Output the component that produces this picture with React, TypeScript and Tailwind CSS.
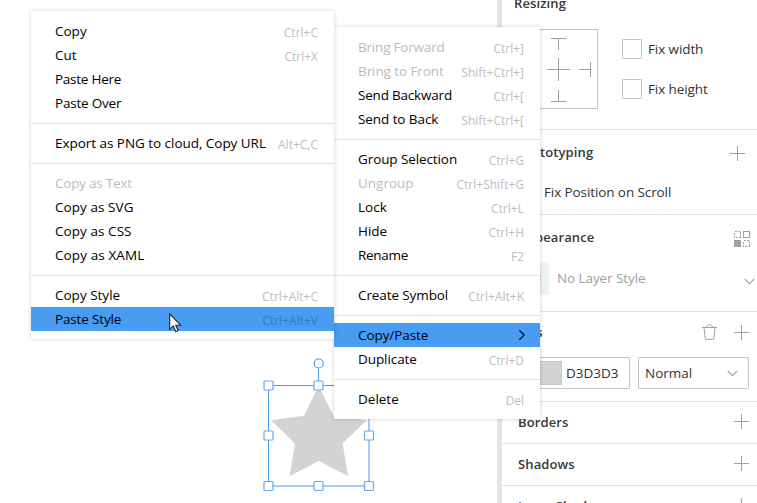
import React from 'react';

type Item = { label: string; keys?: string; disabled?: boolean; active?: boolean; sub?: boolean; ls?: number };

const clipboardMenu: Item[][] = [
  [
    { label: 'Copy', keys: 'Ctrl+C' },
    { label: 'Cut', keys: 'Ctrl+X' },
    { label: 'Paste Here', ls: -0.25 },
    { label: 'Paste Over', ls: -0.2 },
  ],
  [{ label: 'Export as PNG to cloud, Copy URL', keys: 'Alt+C,C', ls: -0.04 }],
  [
    { label: 'Copy as Text', disabled: true, ls: -0.22 },
    { label: 'Copy as SVG', ls: 0.06 },
    { label: 'Copy as CSS', ls: 0.06 },
    { label: 'Copy as XAML', ls: 0.1 },
  ],
  [
    { label: 'Copy Style', keys: 'Ctrl+Alt+C' },
    { label: 'Paste Style', keys: 'Ctrl+Alt+V', active: true, ls: -0.15 },
  ],
];

const layerMenu: Item[][] = [
  [
    { label: 'Bring Forward', keys: 'Ctrl+]', disabled: true, ls: -0.2 },
    { label: 'Bring to Front', keys: 'Shift+Ctrl+]', disabled: true, ls: -0.08 },
    { label: 'Send Backward', keys: 'Ctrl+[', ls: -0.2 },
    { label: 'Send to Back', keys: 'Shift+Ctrl+[', ls: -0.08 },
  ],
  [
    { label: 'Group Selection', keys: 'Ctrl+G', ls: -0.1 },
    { label: 'Ungroup', keys: 'Ctrl+Shift+G', disabled: true },
    { label: 'Lock', keys: 'Ctrl+L' },
    { label: 'Hide', keys: 'Ctrl+H' },
    { label: 'Rename', keys: 'F2', ls: -0.3 },
  ],
  [{ label: 'Create Symbol', keys: 'Ctrl+Alt+K', ls: -0.1 }],
  [
    { label: 'Copy/Paste', active: true, sub: true, ls: -0.08 },
    { label: 'Duplicate', keys: 'Ctrl+D', ls: -0.08 },
  ],
  [{ label: 'Delete', keys: 'Del' }],
];

function Menu({ groups, className }: { groups: Item[][]; className: string }) {
  return (
    <div className={`absolute bg-white py-2 shadow-[0_0_4px_rgba(0,0,0,0.2)] ${className}`}>
      {groups.map((group, g) => (
        <React.Fragment key={g}>
          {g > 0 && (
            <div className="h-4 pt-2">
              <div className="h-px bg-[#e0e0e0]" />
            </div>
          )}
          {group.map((item) => (
            <div
              key={item.label}
              className={`flex h-6 items-center justify-between whitespace-nowrap pl-6 pr-4 text-[13.5px] leading-6 ${item.active ? 'bg-[#489cf2]' : ''} ${item.disabled ? 'text-[#bcbcbc]' : 'text-black'}`}
            >
              <span style={{ letterSpacing: item.ls ?? 0 }}>{item.label}</span>
              {item.keys && (
                <span className={`pt-1 text-[12px] ${item.active ? 'text-[#3779b9]' : 'text-[#bdbdbd]'}`}>{item.keys}</span>
              )}
              {item.sub && (
                <svg className="-mr-0.5" width="8" height="12" viewBox="0 0 8 12" fill="none" stroke="#111" strokeWidth="1.3">
                  <path d="M1.2 1.2 6.2 6 1.2 10.8" />
                </svg>
              )}
            </div>
          ))}
        </React.Fragment>
      ))}
    </div>
  );
}

const Plus = () => (
  <svg className="shrink-0" width="15" height="15" viewBox="0 0 15 15" stroke="#a0a0a0" shapeRendering="crispEdges">
    <path d="M0 7.5H15M7.5 0V15" />
  </svg>
);

const Chevron = () => (
  <svg className="shrink-0" width="11" height="7" viewBox="0 0 11 7" fill="none" stroke="#a0a0a0" strokeWidth="1.2">
    <path d="M.7.8 5.5 5.6 10.3.8" />
  </svg>
);

const Title = ({ children }: { children: string }) => (
  <h2 className="text-[13px] font-semibold leading-5 tracking-[0.12px] text-[#383838]">{children}</h2>
);

const Check = ({ label }: { label: string }) => (
  <div className="flex h-5 items-center gap-1.5 text-[13.5px]">
    <i className="size-5 rounded-[1px] border border-[#c4c4c4]" />
    <span className="whitespace-nowrap tracking-[-0.1px]">{label}</span>
  </div>
);

function Inspector() {
  return (
    <aside className="h-[503px] w-[260px] shrink-0 overflow-hidden border-l-[5px] border-[#e4e4e4] bg-white text-[#333]">
      <section className="flow-root h-[130px] border-b border-[#e0e0e0] pl-4">
        <div className="-ml-1 -mt-[7px]"><Title>Resizing</Title></div>
        <div className="mt-4 flex gap-6">
          <div className="h-20 w-20 border border-[#c4c4c4]">
            <svg width="78" height="78" viewBox="519 30 78 78" stroke="#a0a0a0" shapeRendering="crispEdges">
              <path d="M551 38.5h15M558.5 38v12M547 69.5h23M558.5 58v23M579 69.5h12M590.5 62v15M551 101.5h15M558.5 90v12M526.5 62v15M526 69.5h12" />
            </svg>
          </div>
          <div className="flex flex-col gap-5 pt-2.5">
            <Check label="Fix width" />
            <Check label="Fix height" />
          </div>
        </div>
      </section>
      <section className="h-[85px] border-b border-[#e0e0e0] pl-4 pt-3">
        <div className="flex items-start justify-between pr-3">
          <Title>Prototyping</Title>
          <div className="pt-1"><Plus /></div>
        </div>
        <div className="mt-5"><Check label="Fix Position on Scroll" /></div>
      </section>
      <section className="h-[97px] border-b border-[#e0e0e0] pl-4 pt-3">
        <div className="flex items-start justify-between pr-[7px]">
          <Title>Appearance</Title>
          <svg className="mt-1" width="16" height="16" viewBox="0 0 16 16" fill="none" stroke="#a0a0a0" shapeRendering="crispEdges">
            <path d="M.5.5h6v6h-6zM9.5 9.5h6v6h-6z" strokeDasharray="2 1" />
            <path d="M9.5.5h6v6h-6z" />
            <rect x=".5" y="9.5" width="6" height="6" fill="#a0a0a0" />
          </svg>
        </div>
        <div className="mt-4 flex items-center">
          <div className="flex h-8 w-[31px] items-center justify-end rounded-[2px] bg-[#f1f1f1] pr-2 text-[#999]">≡</div>
          <span className="ml-2 grow pb-0.5 text-[13.5px] tracking-[-0.08px] text-[#a0a0a0]">No Layer Style</span>
          <span className="pr-0.5 pt-1"><Chevron /></span>
        </div>
      </section>
      <section className="h-[90px] border-b border-[#e0e0e0] pl-4 pt-[10px]">
        <div className="flex items-center pr-2">
          <div className="grow"><Title>Fills</Title></div>
          <svg className="mr-[17px]" width="15" height="16" viewBox="0 0 15 16" fill="none" stroke="#a0a0a0">
            <path d="M0 3.5h15M2 4l1.4 11.3h8.2L13 4M4.6 3.3C4.8 1.5 5.6.7 7.5.7s2.7.8 2.9 2.6" />
          </svg>
          <Plus />
        </div>
        <div className="mt-[15px] flex gap-2 text-[13.5px]">
          <div className="flex h-8 w-28 items-center rounded-[1px] border border-[#c4c4c4] pl-1">
            <i className="h-6 w-[39px] border border-[#c8c8c8] bg-[#d3d3d3]" />
            <span className="ml-1">D3D3D3</span>
          </div>
          <div className="flex h-8 w-[111px] items-center justify-between rounded-[1px] border border-[#c4c4c4] pl-1.5 pr-[10px]">
            <span>Normal</span>
            <Chevron />
          </div>
        </div>
      </section>
      {['Borders', 'Shadows', 'Inner Shadows'].map((name) => (
        <section key={name} className="flex h-[42px] items-center justify-between border-b border-[#e0e0e0] pl-4 pr-2">
          <div className="pb-0.5"><Title>{name}</Title></div>
          <div className="-mt-0.5"><Plus /></div>
        </section>
      ))}
    </aside>
  );
}

const handles = [[268, 385], [318, 385], [368.5, 385], [268, 435], [368.5, 435], [268, 485.5], [318, 485.5], [368.5, 485.5]];

function Canvas() {
  return (
    <main className="w-[497px] shrink-0 bg-white">
      <svg width="497" height="503" viewBox="0 0 497 503" fill="none">
        <path d="M318.7 386 333.5 415.8 366.8 420.3 342.5 443.5 348.2 476.2 318.7 461 289.5 476.2 295 443.5 271 420.3 304 415.8z" fill="#d3d3d3" />
        <path d="M268.5 486V385.5H369M318.5 369v12" stroke="#489cf2" />
        <path d="M369 385v101H268" stroke="#a3cdf8" strokeWidth="2" />
        <circle cx="318.7" cy="363.5" r="4.5" fill="#fff" stroke="#489cf2" strokeWidth="1.2" />
        {handles.map(([x, y], i) => (
          <rect key={i} x={x - 4} y={y - 4} width="9" height="9" rx="1" fill="#fff" stroke="#62aaf4" strokeWidth="1.2" />
        ))}
      </svg>
    </main>
  );
}

export default function App() {
  return (
    <div className="relative flex h-[503px] w-[757px] overflow-hidden bg-white font-['Open_Sans','Noto_Sans',sans-serif]">
      <Canvas />
      <Inspector />
      <Menu groups={layerMenu} className="left-[334px] top-[27px] w-[206px]" />
      <Menu groups={clipboardMenu} className="left-[31px] top-[11px] w-[303px]" />
      <svg className="absolute left-[169px] top-[313px]" width="13" height="20" viewBox="0 0 13 20">
        <path d="M.7.8v15.5l3.5-3.3 2.6 5.7 2.4-1.1-2.5-5.4h4.9z" fill="#fff" stroke="#16243a" strokeWidth="1.1" />
      </svg>
    </div>
  );
}
